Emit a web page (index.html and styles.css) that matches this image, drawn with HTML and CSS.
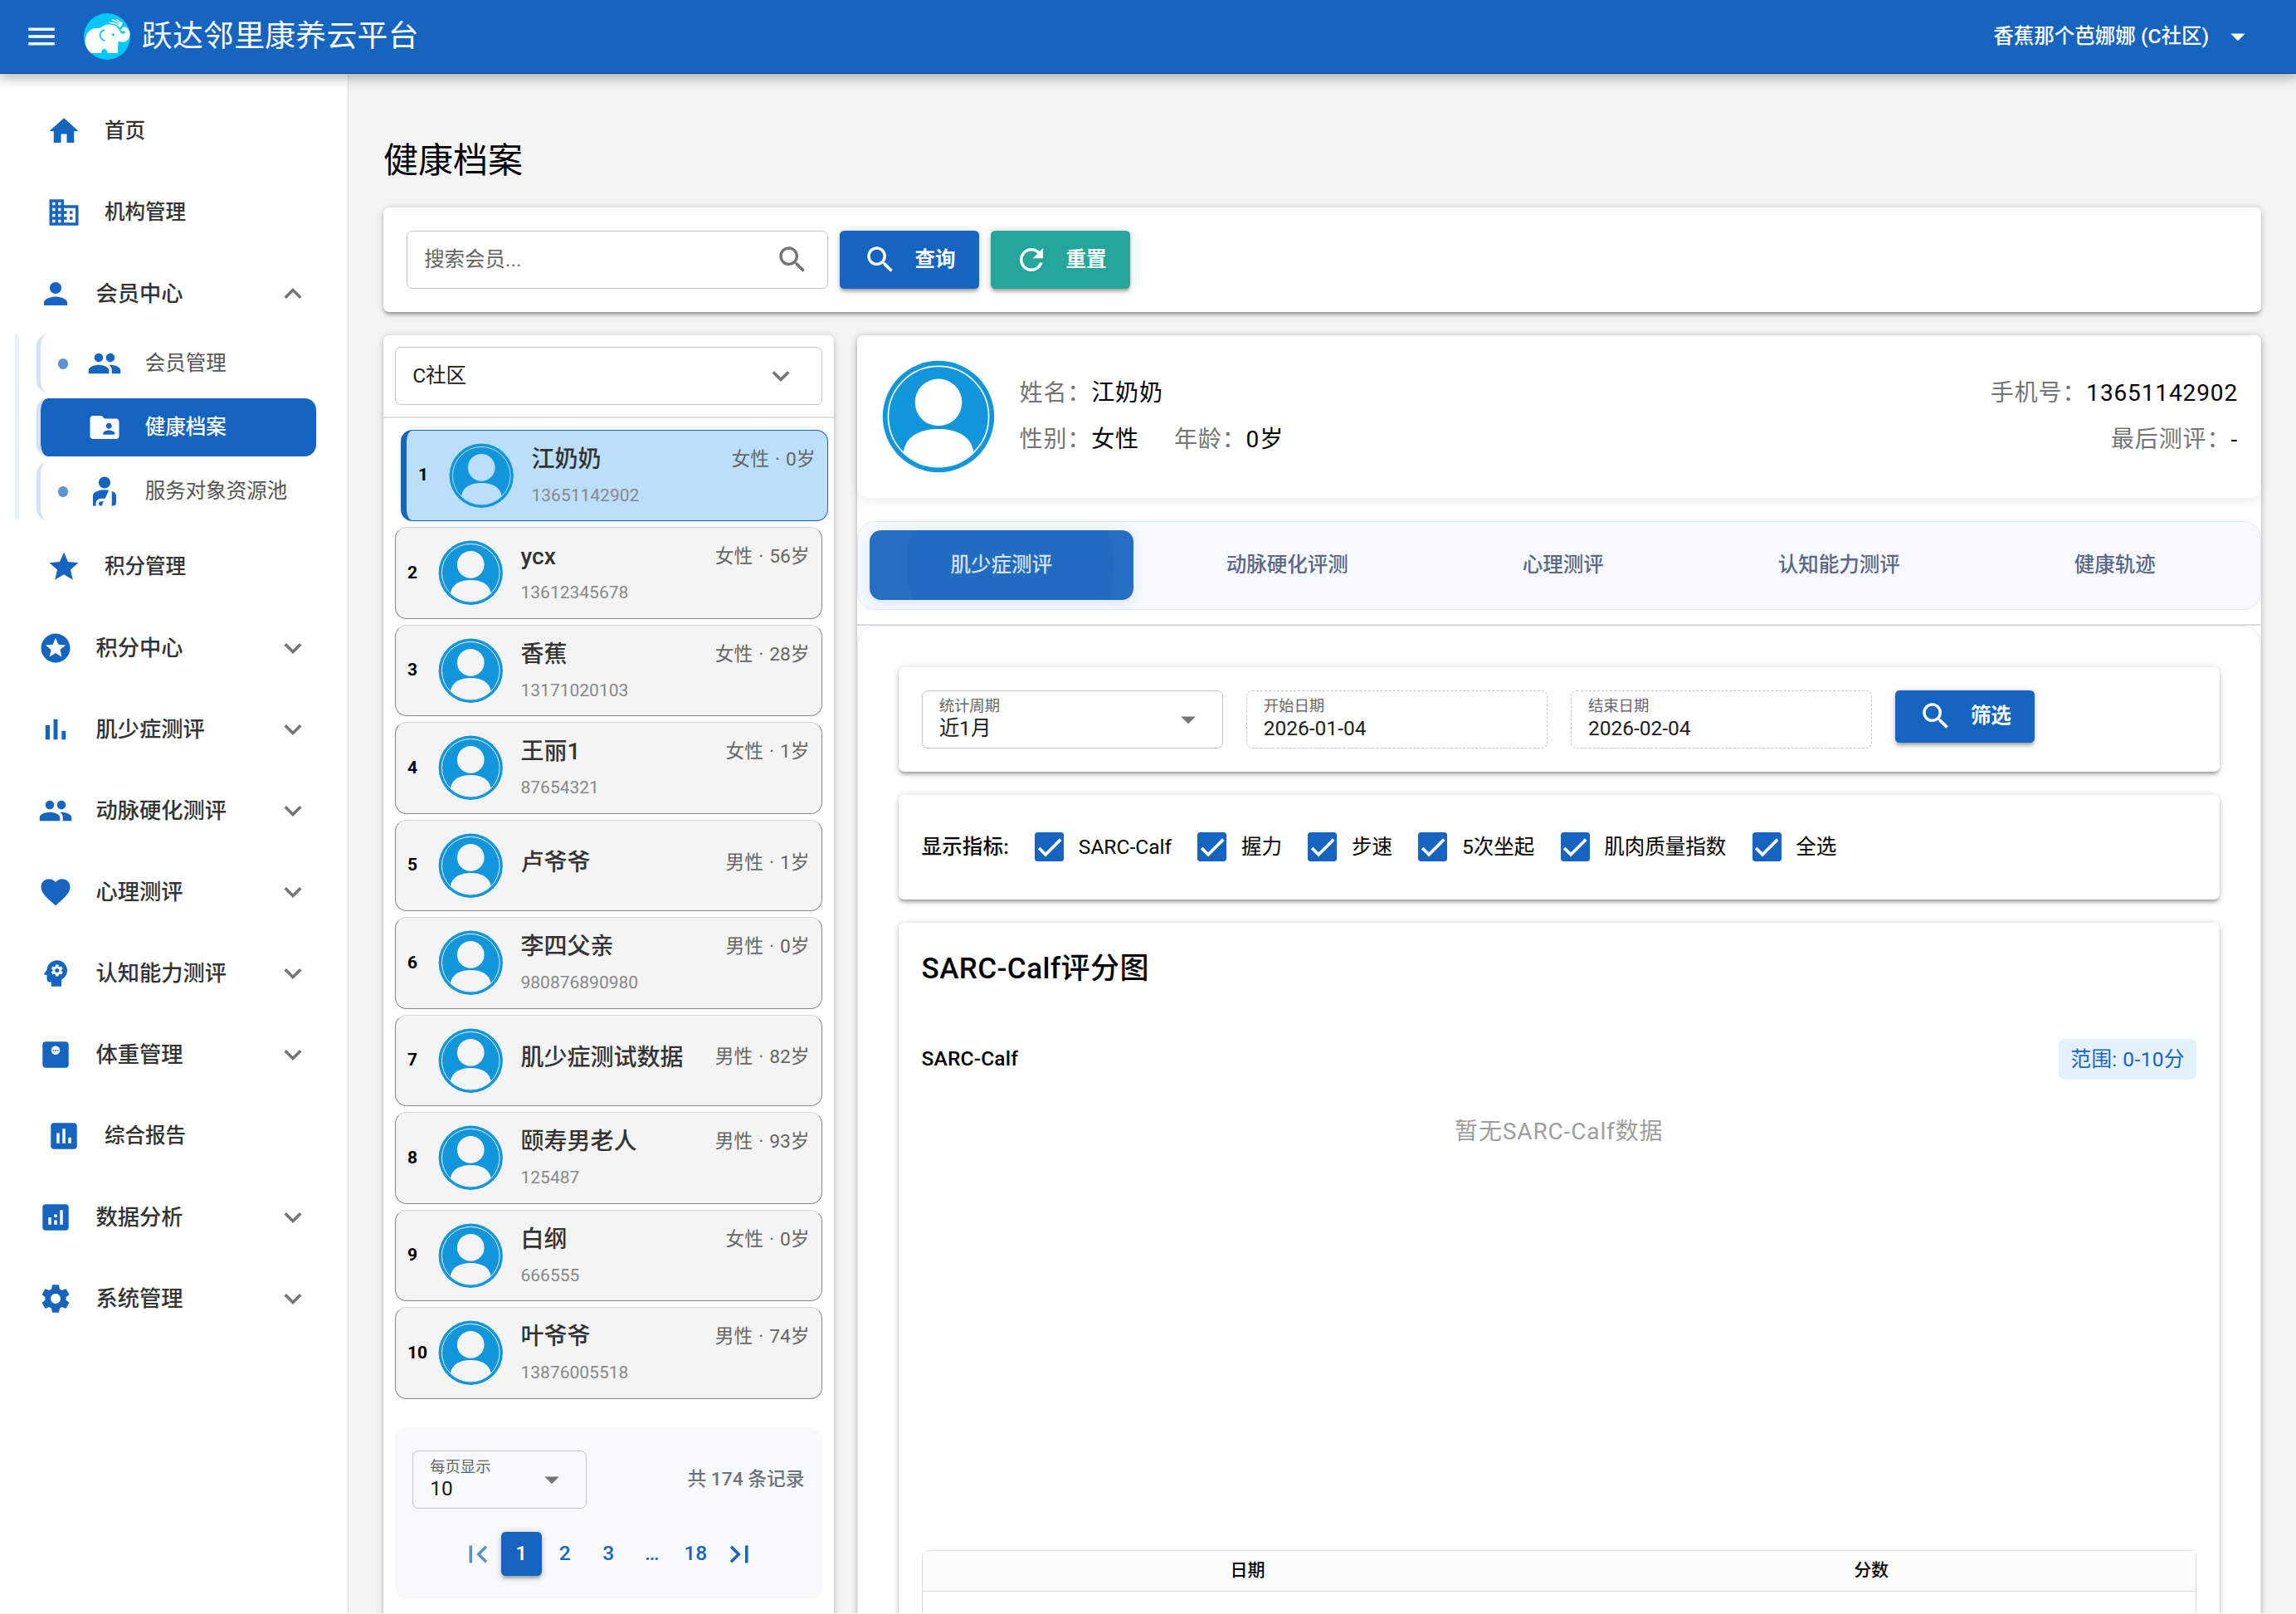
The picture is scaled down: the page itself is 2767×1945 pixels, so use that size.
FILE: index.html
```html
<!DOCTYPE html>
<html lang="zh-CN">
<head>
    <meta charset="utf-8">
    <title>跃达邻里康养云平台</title>
    <link rel="stylesheet" href="styles.css">
</head>
<body>
    <!-- icon set -->
    <svg class="sprite" xmlns="http://www.w3.org/2000/svg">
        <symbol id="i-menu" viewBox="0 0 24 24"><path d="M3 18h18v-2H3v2zm0-5h18v-2H3v2zm0-7v2h18V6H3z"/></symbol>
        <symbol id="i-drop" viewBox="0 0 24 24"><path d="M7 10l5 5 5-5z"/></symbol>
        <symbol id="i-down" viewBox="0 0 24 24"><path d="M7.41 8.59L12 13.17l4.59-4.58L18 10l-6 6-6-6z"/></symbol>
        <symbol id="i-up" viewBox="0 0 24 24"><path d="M7.41 15.41L12 10.83l4.59 4.58L18 14l-6-6-6 6z"/></symbol>
        <symbol id="i-home" viewBox="0 0 24 24"><path d="M10 20v-6h4v6h5v-8h3L12 3 2 12h3v8z"/></symbol>
        <symbol id="i-business" viewBox="0 0 24 24"><path d="M12 7V3H2v18h20V7H12zM6 19H4v-2h2v2zm0-4H4v-2h2v2zm0-4H4V9h2v2zm0-4H4V5h2v2zm4 12H8v-2h2v2zm0-4H8v-2h2v2zm0-4H8V9h2v2zm0-4H8V5h2v2zm10 12h-8v-2h2v-2h-2v-2h2v-2h-2V9h8v10zm-2-8h-2v2h2v-2zm0 4h-2v2h2v-2z"/></symbol>
        <symbol id="i-person" viewBox="0 0 24 24"><path d="M12 12c2.21 0 4-1.79 4-4s-1.79-4-4-4-4 1.79-4 4 1.79 4 4 4zm0 2c-2.67 0-8 1.34-8 4v2h16v-2c0-2.66-5.33-4-8-4z"/></symbol>
        <symbol id="i-people" viewBox="0 0 24 24"><path d="M16 11c1.66 0 2.99-1.34 2.99-3S17.66 5 16 5s-3 1.34-3 3 1.34 3 3 3zm-8 0c1.66 0 2.99-1.34 2.99-3S9.66 5 8 5 5 6.34 5 8s1.34 3 3 3zm0 2c-2.33 0-7 1.17-7 3.5V19h14v-2.5c0-2.33-4.67-3.5-7-3.5zm8 0c-.29 0-.62.02-.97.05 1.16.84 1.97 1.97 1.97 3.45V19h6v-2.5c0-2.33-4.67-3.5-7-3.5z"/></symbol>
        <symbol id="i-folder" viewBox="0 0 24 24"><path d="M20 6h-8l-2-2H4c-1.1 0-1.99.9-1.99 2L2 18c0 1.1.9 2 2 2h16c1.1 0 2-.9 2-2V8c0-1.1-.9-2-2-2zm-5 3c1.1 0 2 .9 2 2s-.9 2-2 2-2-.9-2-2 .9-2 2-2zm4 8h-8v-1c0-1.33 2.67-2 4-2s4 .67 4 2v1z"/></symbol>
        <symbol id="i-injury" viewBox="0 0 24 24"><path d="M8 6c0-2.21 1.79-4 4-4s4 1.79 4 4-1.79 4-4 4-4-1.79-4-4zm9 16h1c1.1 0 2-.9 2-2v-4.78c0-1.12-.61-2.15-1.61-2.66-.43-.22-.9-.43-1.39-.62V22zm-4.66-5L15 11.33c-.93-.21-1.93-.33-3-.33-2.53 0-4.71.7-6.39 1.56C4.61 13.07 4 14.1 4 15.22V22h2.34c-.22-.45-.34-.96-.34-1.5C6 18.57 7.57 17 9.5 17h2.84zM10 22l1.41-3H9.5c-.83 0-1.5.67-1.5 1.5S8.67 22 9.5 22h.5z"/></symbol>
        <symbol id="i-star" viewBox="0 0 24 24"><path d="M12 17.27L18.18 21l-1.64-7.03L22 9.24l-7.19-.61L12 2 9.19 8.63 2 9.24l5.46 4.73L5.82 21z"/></symbol>
        <symbol id="i-stars" viewBox="0 0 24 24"><path d="M11.99 2C6.47 2 2 6.48 2 12s4.47 10 9.99 10C17.52 22 22 17.52 22 12S17.52 2 11.99 2zm4.24 16L12 15.45 7.77 18l1.12-4.81-3.73-3.23 4.92-.42L12 5l1.92 4.53 4.92.42-3.73 3.23L16.23 18z"/></symbol>
        <symbol id="i-bars" viewBox="0 0 24 24"><path d="M5 9.2h3V19H5zM10.6 5h2.8v14h-2.8zm5.6 8H19v6h-2.8z"/></symbol>
        <symbol id="i-heart" viewBox="0 0 24 24"><path d="M12 21.35l-1.45-1.32C5.4 15.36 2 12.28 2 8.5 2 5.42 4.42 3 7.5 3c1.74 0 3.41.81 4.5 2.09C13.09 3.81 14.76 3 16.5 3 19.58 3 22 5.42 22 8.5c0 3.78-3.4 6.86-8.55 11.54L12 21.35z"/></symbol>
        <symbol id="i-mind" viewBox="0 0 24 24"><path d="M13 8.57c-.79 0-1.43.64-1.43 1.43s.64 1.43 1.43 1.43 1.43-.64 1.43-1.43-.64-1.43-1.43-1.43z"/><path d="M13 3C9.25 3 6.2 5.94 6.02 9.64L4.1 12.2c-.25.33-.01.8.4.8H6v3c0 1.1.9 2 2 2h1v3h7v-4.68c2.36-1.12 4-3.53 4-6.32 0-3.87-3.13-7-7-7zm3 7c0 .13-.01.26-.02.39l.83.66c.08.06.1.16.05.25l-.8 1.39c-.05.09-.16.12-.24.09l-.99-.4c-.21.16-.43.29-.67.39L14 13.83c-.01.1-.1.17-.2.17h-1.6c-.1 0-.18-.07-.2-.17l-.15-1.06c-.25-.1-.47-.23-.68-.39l-.99.4c-.09.03-.2 0-.25-.09l-.8-1.39c-.05-.08-.03-.19.05-.25l.84-.66c-.01-.13-.02-.26-.02-.39s.02-.27.04-.39l-.85-.66c-.08-.06-.1-.16-.05-.26l.8-1.38c.05-.09.15-.12.24-.09l1 .4c.2-.15.43-.29.67-.39L12 6.17c.02-.1.1-.17.2-.17h1.6c.1 0 .18.07.2.17l.15 1.06c.24.1.46.23.67.39l1-.4c.09-.03.2 0 .24.09l.8 1.38c.05.09.03.2-.05.26l-.85.66c.03.12.04.25.04.39z"/></symbol>
        <symbol id="i-weight" viewBox="0 0 24 24"><path d="M19 3H5c-1.1 0-2 .9-2 2v14c0 1.1.9 2 2 2h14c1.1 0 2-.9 2-2V5c0-1.1-.9-2-2-2zm-7 9c-1.66 0-3-1.34-3-3s1.34-3 3-3 3 1.34 3 3-1.34 3-3 3z"/><circle cx="10.5" cy="9" r=".5"/><circle cx="12" cy="9" r=".5"/><circle cx="13.5" cy="9" r=".5"/></symbol>
        <symbol id="i-report" viewBox="0 0 24 24"><path d="M19 3H5c-1.1 0-2 .9-2 2v14c0 1.1.9 2 2 2h14c1.1 0 2-.9 2-2V5c0-1.1-.9-2-2-2zM9 17H7v-7h2v7zm4 0h-2V7h2v10zm4 0h-2v-4h2v4z"/></symbol>
        <symbol id="i-analytics" viewBox="0 0 24 24"><path d="M19 3H5c-1.1 0-2 .9-2 2v14c0 1.1.9 2 2 2h14c1.1 0 2-.9 2-2V5c0-1.1-.9-2-2-2zM9 17H7v-5h2v5zm4 0h-2v-3h2v3zm0-5h-2v-2h2v2zm4 5h-2V7h2v10z"/></symbol>
        <symbol id="i-settings" viewBox="0 0 24 24"><path d="M19.14 12.94c.04-.3.06-.61.06-.94 0-.32-.02-.64-.07-.94l2.03-1.58c.18-.14.23-.41.12-.61l-1.92-3.32c-.12-.22-.37-.29-.59-.22l-2.39.96c-.5-.38-1.03-.7-1.62-.94l-.36-2.54c-.04-.24-.24-.41-.48-.41h-3.84c-.24 0-.43.17-.47.41l-.36 2.54c-.59.24-1.13.57-1.62.94l-2.39-.96c-.22-.08-.47 0-.59.22L2.74 8.87c-.12.21-.08.47.12.61l2.03 1.58c-.05.3-.09.63-.09.94s.02.64.07.94l-2.03 1.58c-.18.14-.23.41-.12.61l1.92 3.32c.12.22.37.29.59.22l2.39-.96c.5.38 1.03.7 1.62.94l.36 2.54c.05.24.24.41.48.41h3.84c.24 0 .44-.17.47-.41l.36-2.54c.59-.24 1.13-.56 1.62-.94l2.39.96c.22.08.47 0 .59-.22l1.92-3.32c.12-.22.07-.47-.12-.61l-2.01-1.58zM12 15.4c-1.88 0-3.4-1.52-3.4-3.4s1.52-3.4 3.4-3.4 3.4 1.52 3.4 3.4-1.52 3.4-3.4 3.4z"/></symbol>
        <symbol id="i-search" viewBox="0 0 24 24"><path d="M15.5 14h-.79l-.28-.27C15.41 12.59 16 11.11 16 9.5 16 5.91 13.09 3 9.5 3S3 5.91 3 9.5 5.91 16 9.5 16c1.61 0 3.09-.59 4.23-1.57l.27.28v.79l5 4.99L20.49 19l-4.99-5zm-6 0C7.01 14 5 11.99 5 9.5S7.01 5 9.5 5 14 7.01 14 9.5 11.99 14 9.5 14z"/></symbol>
        <symbol id="i-refresh" viewBox="0 0 24 24"><path d="M17.65 6.35C16.2 4.9 14.21 4 12 4c-4.42 0-7.99 3.58-7.99 8s3.57 8 7.99 8c3.73 0 6.84-2.55 7.73-6h-2.08c-.82 2.33-3.04 4-5.65 4-3.31 0-6-2.69-6-6s2.69-6 6-6c1.66 0 3.14.69 4.22 1.78L13 11h7V4l-2.35 2.35z"/></symbol>
        <symbol id="i-first" viewBox="0 0 24 24"><path d="M18.41 16.59L13.82 12l4.59-4.59L17 6l-6 6 6 6zM6 6h2v12H6z"/></symbol>
        <symbol id="i-last" viewBox="0 0 24 24"><path d="M5.59 7.41L10.18 12l-4.59 4.59L7 18l6-6-6-6zM16 6h2v12h-2z"/></symbol>
        <symbol id="i-check" viewBox="0 0 24 24"><path d="M1.73 12.91l6.37 6.37L22.79 4.59" fill="none" stroke="#fff" stroke-width="3"/></symbol>
        <symbol id="avatar" viewBox="0 0 200 200">
            <circle cx="100" cy="100" r="96" fill="#1296db"/>
            <circle cx="100" cy="100" r="86.5" fill="none" stroke="currentColor" stroke-width="2.4"/>
            <circle cx="100" cy="75.5" r="40.5" fill="currentColor"/>
            <path d="M39.5 161C44 132 71 121.5 100 121.5S156 132 160.5 161A86 86 0 0 1 39.5 161z" fill="currentColor"/>
        </symbol>
    </svg>

    <header class="header">
        <svg class="icon"><use href="#i-menu"/></svg>
        <svg class="logo" viewBox="33 33 168 168">
            <circle cx="117" cy="117" r="84" fill="#00c8ff"/>
            <path d="M38 142C36 116 47 90 76 87C86 86 92 86 97 83C106 75 118 73 130 74C146 75 157 82 162 94C165 103 169 108 176 107C183 106 184 100 180 97C175 99 168 98 166 93C172 90 172 84 178 82C188 82 196 91 199 102C203 122 190 137 174 137C168 137 163 136 158 134L156 160C156 170 159 177 151 177H118C118 166 113 162 107 162C101 162 97 166 96 177H59C48 168 40 156 38 142z" fill="#fff"/>
            <path d="M106 94C88 98 86 125 108 132" fill="none" stroke="#00c8ff" stroke-width="5" stroke-linecap="round"/>
            <circle cx="139" cy="110" r="4.5" fill="#00c8ff"/>
            <path d="M126 68C138 66 152 72 163 82M137 57C148 60 158 68 166 80M153 56C160 60 165 68 167 78M168 66V78" fill="none" stroke="#fff" stroke-width="4" stroke-linecap="round"/>
            <circle cx="168" cy="69" r="5.5" fill="#fff"/>
        </svg>
        <div class="brand">跃达邻里康养云平台</div>
        <div class="user">香蕉那个芭娜娜 (C社区)<svg class="icon"><use href="#i-drop"/></svg></div>
    </header>

    <div class="layout">
        <nav class="sidebar">
            <div class="nav-item"><svg class="icon"><use href="#i-home"/></svg><span>首页</span></div>
            <div class="nav-item"><svg class="icon"><use href="#i-business"/></svg><span>机构管理</span></div>
            <div class="nav-group"><svg class="icon"><use href="#i-person"/></svg><span>会员中心</span><svg class="icon arrow"><use href="#i-up"/></svg></div>
            <div class="sub-menu">
                <div class="sub-item"><i class="dot"></i><svg class="icon"><use href="#i-people"/></svg><span>会员管理</span></div>
                <div class="sub-item active"><i class="dot"></i><svg class="icon"><use href="#i-folder"/></svg><span>健康档案</span></div>
                <div class="sub-item"><i class="dot"></i><svg class="icon"><use href="#i-injury"/></svg><span>服务对象资源池</span></div>
            </div>
            <div class="nav-item"><svg class="icon"><use href="#i-star"/></svg><span>积分管理</span></div>
            <div class="nav-group"><svg class="icon"><use href="#i-stars"/></svg><span>积分中心</span><svg class="icon arrow"><use href="#i-down"/></svg></div>
            <div class="nav-group"><svg class="icon"><use href="#i-bars"/></svg><span>肌少症测评</span><svg class="icon arrow"><use href="#i-down"/></svg></div>
            <div class="nav-group"><svg class="icon"><use href="#i-people"/></svg><span>动脉硬化测评</span><svg class="icon arrow"><use href="#i-down"/></svg></div>
            <div class="nav-group"><svg class="icon"><use href="#i-heart"/></svg><span>心理测评</span><svg class="icon arrow"><use href="#i-down"/></svg></div>
            <div class="nav-group"><svg class="icon"><use href="#i-mind"/></svg><span>认知能力测评</span><svg class="icon arrow"><use href="#i-down"/></svg></div>
            <div class="nav-group"><svg class="icon"><use href="#i-weight"/></svg><span>体重管理</span><svg class="icon arrow"><use href="#i-down"/></svg></div>
            <div class="nav-item"><svg class="icon"><use href="#i-report"/></svg><span>综合报告</span></div>
            <div class="nav-group"><svg class="icon"><use href="#i-analytics"/></svg><span>数据分析</span><svg class="icon arrow"><use href="#i-down"/></svg></div>
            <div class="nav-group"><svg class="icon"><use href="#i-settings"/></svg><span>系统管理</span><svg class="icon arrow"><use href="#i-down"/></svg></div>
        </nav>

        <main class="page">
            <h1 class="page-title">健康档案</h1>

            <div class="card search-bar">
                <div class="field search-input"><span>搜索会员...</span><svg class="icon"><use href="#i-search"/></svg></div>
                <div class="btn btn-primary"><svg class="icon"><use href="#i-search"/></svg>查询</div>
                <div class="btn btn-reset"><svg class="icon"><use href="#i-refresh"/></svg>重置</div>
            </div>

            <div class="columns">
                <section class="card members">
                    <div class="members-head">
                        <div class="field community"><span>C社区</span><svg class="icon"><use href="#i-down"/></svg></div>
                    </div>
                    <div class="member-list">
                        <div class="member selected">
                            <b>1</b><svg class="avatar"><use href="#avatar"/></svg>
                            <div class="member-info"><div class="member-row"><span class="name">江奶奶</span><span class="meta">女性 · 0岁</span></div><div class="phone">13651142902</div></div>
                        </div>
                        <div class="member">
                            <b>2</b><svg class="avatar"><use href="#avatar"/></svg>
                            <div class="member-info"><div class="member-row"><span class="name">ycx</span><span class="meta">女性 · 56岁</span></div><div class="phone">13612345678</div></div>
                        </div>
                        <div class="member">
                            <b>3</b><svg class="avatar"><use href="#avatar"/></svg>
                            <div class="member-info"><div class="member-row"><span class="name">香蕉</span><span class="meta">女性 · 28岁</span></div><div class="phone">13171020103</div></div>
                        </div>
                        <div class="member">
                            <b>4</b><svg class="avatar"><use href="#avatar"/></svg>
                            <div class="member-info"><div class="member-row"><span class="name">王丽1</span><span class="meta">女性 · 1岁</span></div><div class="phone">87654321</div></div>
                        </div>
                        <div class="member">
                            <b>5</b><svg class="avatar"><use href="#avatar"/></svg>
                            <div class="member-info"><div class="member-row"><span class="name">卢爷爷</span><span class="meta">男性 · 1岁</span></div></div>
                        </div>
                        <div class="member">
                            <b>6</b><svg class="avatar"><use href="#avatar"/></svg>
                            <div class="member-info"><div class="member-row"><span class="name">李四父亲</span><span class="meta">男性 · 0岁</span></div><div class="phone">980876890980</div></div>
                        </div>
                        <div class="member">
                            <b>7</b><svg class="avatar"><use href="#avatar"/></svg>
                            <div class="member-info"><div class="member-row"><span class="name">肌少症测试数据</span><span class="meta">男性 · 82岁</span></div></div>
                        </div>
                        <div class="member">
                            <b>8</b><svg class="avatar"><use href="#avatar"/></svg>
                            <div class="member-info"><div class="member-row"><span class="name">颐寿男老人</span><span class="meta">男性 · 93岁</span></div><div class="phone">125487</div></div>
                        </div>
                        <div class="member">
                            <b>9</b><svg class="avatar"><use href="#avatar"/></svg>
                            <div class="member-info"><div class="member-row"><span class="name">白纲</span><span class="meta">女性 · 0岁</span></div><div class="phone">666555</div></div>
                        </div>
                        <div class="member">
                            <b>10</b><svg class="avatar"><use href="#avatar"/></svg>
                            <div class="member-info"><div class="member-row"><span class="name">叶爷爷</span><span class="meta">男性 · 74岁</span></div><div class="phone">13876005518</div></div>
                        </div>
                    </div>
                    <div class="pager">
                        <div class="pager-top">
                            <div class="field labelled page-size">
                                <div class="field-text"><small>每页显示</small><span>10</span></div>
                                <svg class="icon"><use href="#i-drop"/></svg>
                            </div>
                            <span class="total">共 174 条记录</span>
                        </div>
                        <div class="pages">
                            <span class="page-btn disabled"><svg class="icon"><use href="#i-first"/></svg></span>
                            <span class="page-btn current">1</span>
                            <span class="page-btn">2</span>
                            <span class="page-btn">3</span>
                            <span class="page-btn">…</span>
                            <span class="page-btn">18</span>
                            <span class="page-btn"><svg class="icon"><use href="#i-last"/></svg></span>
                        </div>
                    </div>
                </section>

                <section class="card detail">
                    <div class="profile">
                        <svg class="avatar-lg"><use href="#avatar"/></svg>
                        <div class="profile-info">
                            <div><label>姓名：</label><span>江奶奶</span></div>
                            <div><label>性别：</label><span>女性</span><label class="age">年龄：</label><span>0岁</span></div>
                        </div>
                        <div class="profile-side">
                            <div><label>手机号：</label><span>13651142902</span></div>
                            <div><label>最后测评：</label><span>-</span></div>
                        </div>
                    </div>

                    <div class="tabs">
                        <div class="tab active">肌少症测评</div>
                        <div class="tab">动脉硬化评测</div>
                        <div class="tab">心理测评</div>
                        <div class="tab">认知能力测评</div>
                        <div class="tab">健康轨迹</div>
                    </div>

                    <div class="separator"></div>

                    <div class="panel">
                        <div class="card filters">
                            <div class="field labelled">
                                <div class="field-text"><small>统计周期</small><span>近1月</span></div>
                                <svg class="icon"><use href="#i-drop"/></svg>
                            </div>
                            <div class="field labelled readonly">
                                <div class="field-text"><small>开始日期</small><span>2026-01-04</span></div>
                            </div>
                            <div class="field labelled readonly">
                                <div class="field-text"><small>结束日期</small><span>2026-02-04</span></div>
                            </div>
                            <div class="btn btn-primary btn-filter"><svg class="icon"><use href="#i-search"/></svg>筛选</div>
                        </div>

                        <div class="card metrics">
                            <span class="metrics-title">显示指标:</span>
                            <div class="check"><i><svg><use href="#i-check"/></svg></i>SARC-Calf</div>
                            <div class="check"><i><svg><use href="#i-check"/></svg></i>握力</div>
                            <div class="check"><i><svg><use href="#i-check"/></svg></i>步速</div>
                            <div class="check"><i><svg><use href="#i-check"/></svg></i>5次坐起</div>
                            <div class="check"><i><svg><use href="#i-check"/></svg></i>肌肉质量指数</div>
                            <div class="check"><i><svg><use href="#i-check"/></svg></i>全选</div>
                        </div>

                        <div class="card score">
                            <h2>SARC-Calf评分图</h2>
                            <div class="score-head"><span>SARC-Calf</span><span class="range">范围: 0-10分</span></div>
                            <div class="empty">暂无SARC-Calf数据</div>
                            <div class="table">
                                <div class="table-head"><span>日期</span><span>分数</span></div>
                            </div>
                        </div>
                    </div>
                </section>
            </div>
        </main>
    </div>
</body>
</html>
```
FILE: styles.css
```css
html {
    zoom: 1.75;
}

* {
    box-sizing: border-box;
}

body {
    margin: 0;
    height: 1111px;
    overflow: hidden;
    background: #f4f4f4;
    color: #000;
    font-family: Roboto, "Noto Sans CJK SC", sans-serif;
    font-size: 14px;
    line-height: 1.5;
}

.sprite {
    display: none;
}

.icon {
    width: 24px;
    height: 24px;
    flex: none;
    fill: currentColor;
}

.card {
    background: #fff;
    border-radius: 4px;
    box-shadow: 0 1px 5px rgba(0, 0, 0, .2), 0 2px 2px rgba(0, 0, 0, .14), 0 3px 1px -2px rgba(0, 0, 0, .12);
}

/* header */
.header {
    position: relative;
    z-index: 2;
    display: flex;
    align-items: center;
    height: 50.86px;
    padding: 0 28px 0 16.8px;
    background: #1565c0;
    border-bottom: 1px solid #11457f;
    box-shadow: 0 0 10px 2px rgba(0, 0, 0, .2), 0 0 10px rgba(0, 0, 0, .24);
    color: #fff;
}

.logo {
    width: 32px;
    height: 32px;
    margin: 0 8px 0 16.8px;
}

.brand {
    flex: 1;
    font-size: 21px;
    letter-spacing: .01em;
}

.user {
    display: flex;
    align-items: center;
    gap: 8px;
    font-weight: 500;
}

/* sidebar */
.layout {
    display: flex;
    height: 1061px;
}

.sidebar {
    display: flex;
    flex-direction: column;
    width: 240px;
    flex: none;
    padding-top: 11.7px;
    background: #fff;
    border-right: 1px solid #dcdcdc;
}

.nav-item,
.nav-group {
    display: flex;
    align-items: center;
    flex: none;
    height: 48px;
    margin: 4px 0;
    font-weight: 500;
    color: #333;
}

.nav-item {
    padding-left: 32px;
    gap: 16px;
}

.nav-group {
    padding: 0 26px;
    gap: 16px;
    font-size: 15px;
}

.nav-item .icon,
.nav-group .icon {
    color: #1565c0;
}

.nav-group span {
    flex: 1;
}

.nav-group .arrow {
    color: #757575;
}

.sub-menu {
    display: flex;
    flex-direction: column;
    gap: 4px;
    margin: 0 22px 4px 10.3px;
    padding-left: 12px;
    border-left: 3px solid #e8f0fe;
}

.sub-item {
    display: flex;
    align-items: center;
    height: 40px;
    padding-left: 12px;
    border-left: 3px solid #d5e1f8;
    border-radius: 8px;
    color: #555;
}

.sub-item .icon {
    margin: 0 16px 0 12.9px;
    color: #1565c0;
}

.dot {
    width: 7px;
    height: 7px;
    border-radius: 50%;
    background: #1565c0;
    opacity: .7;
}

.sub-item.active {
    background: #1565c0;
    background-clip: padding-box;
    color: #fff;
    font-weight: 500;
}

.sub-item.active .icon {
    color: #fff;
}

/* page */
.page {
    flex: 1;
    min-width: 0;
    padding: 41.6px 24px 0;
}

.page-title {
    margin: 0 0 14.4px;
    font-size: 24px;
    font-weight: 400;
    line-height: 36px;
}

.field {
    display: flex;
    align-items: center;
    justify-content: space-between;
    height: 40px;
    padding: 0 11.5px;
    border: 1px solid #c2c2c2;
    border-radius: 4px;
    color: #1d1d1d;
}

.field .icon {
    color: #757575;
}

.btn {
    display: flex;
    align-items: center;
    gap: 12px;
    height: 40px;
    padding: 0 16px;
    border-radius: 3px;
    box-shadow: 0 1px 5px rgba(0, 0, 0, .2), 0 2px 2px rgba(0, 0, 0, .14), 0 3px 1px -2px rgba(0, 0, 0, .12);
    color: #fff;
    font-weight: 700;
}

.btn-primary {
    background: #1565c0;
}

.btn-reset {
    background: #26a69a;
}

.search-bar {
    display: flex;
    gap: 8px;
    height: 72px;
    padding: 16px;
}

.search-input {
    width: 290px;
    color: #666;
}

.columns {
    display: flex;
    align-items: flex-start;
    gap: 16px;
    margin-top: 16px;
}

/* member list */
.members {
    width: 310px;
    height: 920px;
    flex: none;
}

.members-head {
    padding: 8px;
    border-bottom: 1.2px solid #e0e0e0;
}

.community {
    padding-right: 16px;
}

.member-list {
    display: flex;
    flex-direction: column;
    gap: 4px;
    padding: 8px;
}

.member {
    display: flex;
    align-items: center;
    height: 63.13px;
    padding: 0 8px;
    background: #f4f4f4;
    border: 1px solid #8c8488;
    border-top-color: #d4d4d4;
    border-radius: 8px;
}

.member b {
    width: 20.4px;
    font-size: 12px;
}

.avatar {
    width: 46px;
    height: 46px;
    margin-right: 11.6px;
    color: #f4f4f4;
}

.member-info {
    flex: 1;
}

.member-row {
    display: flex;
    justify-content: space-between;
    align-items: center;
    height: 24px;
    margin-bottom: 4px;
}

.name {
    font-size: 16px;
    font-weight: 500;
    color: #333;
}

.meta {
    font-size: 13px;
    word-spacing: .8px;
    color: #666;
}

.phone {
    font-size: 12px;
    line-height: 18px;
    color: #888;
}

.member.selected {
    background: #bbdefb;
    border-color: #1565c0;
    border-left-width: 4px;
    transform: translateX(4px);
}

.selected .avatar {
    color: #bbdefb;
}

.pager {
    margin: 11.8px 8px 0;
    padding: 16px 12px;
    height: 118px;
    background: #f8f9fb;
    border-radius: 8px;
}

.pager-top {
    display: flex;
    justify-content: space-between;
    align-items: center;
}

.page-size {
    width: 120px;
}

.field-text {
    display: flex;
    flex-direction: column;
    padding-bottom: 1.6px;
}

.field-text small {
    font-size: 10.5px;
    line-height: 14px;
    color: #666;
}

.field-text span {
    line-height: 16px;
}

.total {
    font-size: 13px;
    font-weight: 500;
    color: #6c757d;
}

.pages {
    display: flex;
    justify-content: center;
    gap: 2px;
    margin-top: 16px;
}

.page-btn {
    display: flex;
    align-items: center;
    justify-content: center;
    width: 28px;
    height: 30px;
    border-radius: 3px;
    color: #1565c0;
    font-weight: 500;
}

.page-btn.current {
    background: #1565c0;
    box-shadow: 0 1px 5px rgba(0, 0, 0, .2), 0 2px 2px rgba(0, 0, 0, .14), 0 3px 1px -2px rgba(0, 0, 0, .12);
    color: #fff;
}

.page-btn.disabled {
    opacity: .7;
}

/* detail */
.detail {
    flex: 1;
    height: 920px;
}

.profile {
    display: flex;
    align-items: center;
    height: 112px;
    padding: 16px;
    border-radius: 4px 4px 8px 8px;
    box-shadow: 0 2px 8px rgba(0, 0, 0, .08);
    font-size: 16px;
    line-height: 28px;
    letter-spacing: .03125em;
}

.profile label {
    color: #757575;
}

.profile .age {
    margin-left: 24px;
}

.avatar-lg {
    width: 80px;
    height: 80px;
    margin-right: 16px;
    color: #fff;
}

.profile-info,
.profile-side {
    display: flex;
    flex-direction: column;
    gap: 4px;
}

.profile-side {
    margin-left: auto;
    text-align: right;
}

.tabs {
    display: flex;
    gap: 8px;
    height: 61px;
    margin-top: 16px;
    padding: 6px 8px;
    background: #f6f9ff;
    border: 1px solid #e0e8f6;
    border-radius: 12px;
}

.tab {
    width: 182px;
    height: 48px;
    border-radius: 8px;
    line-height: 48px;
    text-align: center;
    font-weight: 500;
    color: #5b6885;
}

.tab.active {
    margin-right: 6.8px;
    background: radial-gradient(circle at 97px 24px, #216bc0 71px, #266ec2 71.5px);
    box-shadow: 0 2px 8px rgba(21, 101, 192, .12);
    color: #d3e1f3;
}

.separator {
    height: 1px;
    margin-top: 10px;
    background: #dcdcdc;
}

.panel {
    padding: 28px;
    border: 1px solid #e3e9f6;
    border-radius: 12px;
}

.filters {
    display: flex;
    gap: 16px;
    height: 72px;
    padding: 16px;
}

.labelled {
    width: 207.5px;
}

.page-size.labelled {
    width: 120px;
}

.readonly {
    border-style: dashed;
}

.btn-filter {
    height: 36px;
}

.metrics {
    display: flex;
    align-items: center;
    gap: 8px;
    height: 72px;
    margin-top: 16px;
    padding: 0 16px;
}

.metrics-title {
    font-weight: 500;
    letter-spacing: .00714em;
}

.check {
    display: flex;
    align-items: center;
}

.check i {
    display: flex;
    align-items: center;
    justify-content: center;
    width: 20px;
    height: 20px;
    margin: 0 10px;
    background: #1565c0;
    border-radius: 2px;
}

.check svg {
    width: 17px;
    height: 17px;
}

.score {
    height: 560px;
    margin-top: 16px;
    padding: 16px;
}

.score h2 {
    margin: 0;
    font-size: 20px;
    font-weight: 500;
    line-height: 32px;
    letter-spacing: .0125em;
}

.score-head {
    display: flex;
    justify-content: space-between;
    align-items: center;
    margin-top: 32px;
    font-weight: 500;
    letter-spacing: .00714em;
}

.range {
    height: 28px;
    padding: 0 8px;
    line-height: 28px;
    background: #e3f2fd;
    border-radius: 4px;
    color: #1565c0;
    font-weight: 400;
    letter-spacing: .01786em;
}

.empty {
    height: 300px;
    margin-top: 24px;
    font-size: 16px;
    line-height: 24px;
    letter-spacing: .03125em;
    text-align: center;
    color: #9e9e9e;
}

.table {
    height: 120px;
    border: 1px solid #ddd;
    border-radius: 4px;
}

.table-head {
    display: grid;
    grid-template-columns: 448px 411px;
    height: 28px;
    background: #fcfcfc;
    border-bottom: 1px solid #ddd;
    font-size: 12px;
    font-weight: 500;
    line-height: 27px;
    text-align: center;
}
```
